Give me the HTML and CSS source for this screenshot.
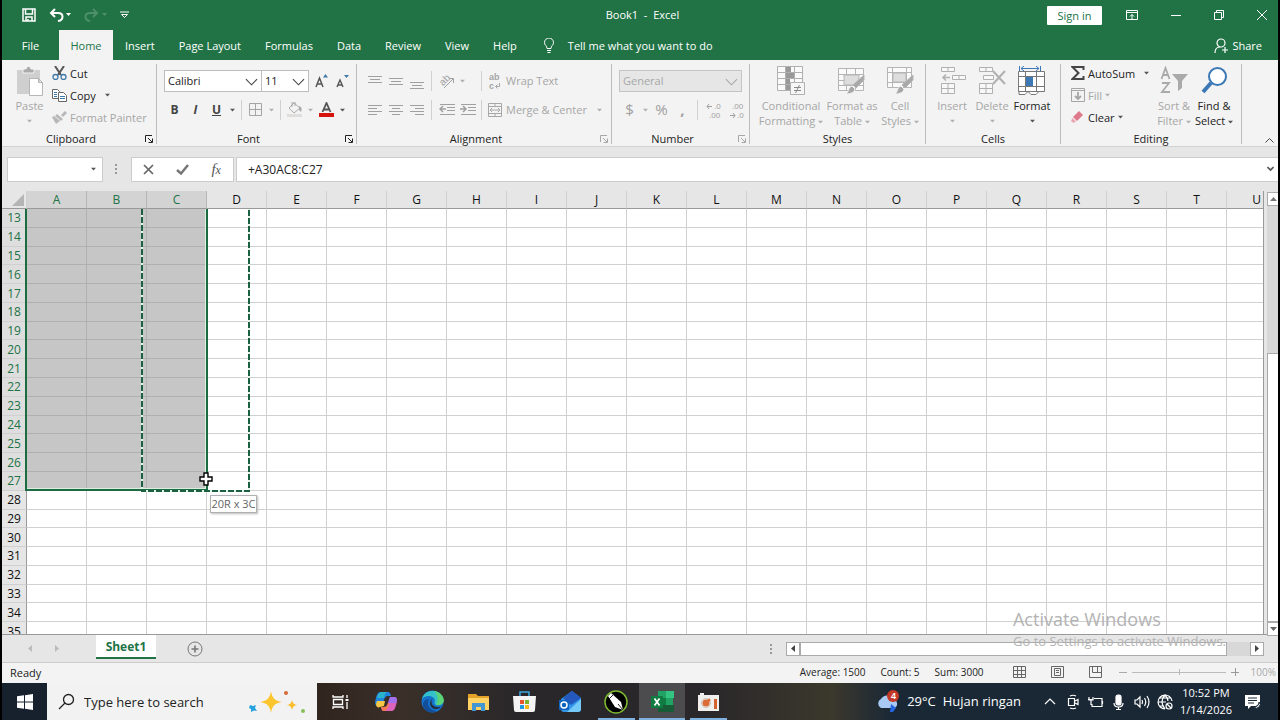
FILE: index.html
```html
<!DOCTYPE html>
<html lang="en">
<head>
<meta charset="utf-8">
<title>Book1 - Excel</title>
<link rel="stylesheet" href="styles.css">
</head>
<body>
<svg class="defs" aria-hidden="true">
  <symbol id="caret" viewBox="0 0 6 4"><path d="M0 .5h6L3 3.7z" fill="currentColor"/></symbol>
  <symbol id="chevron" viewBox="0 0 14 8"><path d="M1 1l6 6 6-6" fill="none" stroke="currentColor" stroke-width="1.2"/></symbol>
  <symbol id="launcher" viewBox="0 0 8 8"><path d="M.5 7V.5H7M3 3l4 4M7.500 3.500v4h-4" fill="none" stroke="currentColor"/></symbol>
  <symbol id="brush" viewBox="0 0 20 20"><path d="M19 0v5l-8 8-3-3z" fill="#a8a8a8"/><path d="M7 11l3 3c0 3-4 5-9 5 3-2 2-7 6-8z" fill="#a8a8a8" stroke="#f3f3f3"/></symbol>
</svg>
<div class="app">
  <header class="titlebar">
    <div class="quick">
      <button aria-label="Save"><svg width="14" height="14" viewBox="0 0 14 14" fill="none" stroke="#fff" stroke-width="1.500"><path d="M1 1h12v12H1zM3.500 1v5h7V1M4 13V9h6v4M6 13v-2"/></svg></button>
      <button aria-label="Undo"><svg width="22" height="14" viewBox="0 0 22 14"><path d="M6 1L2 5l4 4M2 5h7c6 0 6 7 0 8" fill="none" stroke="#fff" stroke-width="2"/><path d="M17 5h5l-2.500 3z" fill="#fff"/></svg></button>
      <button aria-label="Redo" disabled><svg width="23" height="14" viewBox="0 0 23 14"><path d="M9 1l4 4-4 4M13 5H6c-6 0-6 7 0 8" fill="none" stroke="#4e9069" stroke-width="2"/><path d="M18 5h5l-2.500 3z" fill="#4e9069"/></svg></button>
      <button aria-label="Customize"><svg width="9" height="8" viewBox="0 0 9 8" fill="none" stroke="#fff"><path d="M0 1h9M1.500 3.500l3 3 3-3z"/></svg></button>
    </div>
    <h1 class="doc">Book1&nbsp; -&nbsp; Excel</h1>
    <div class="window">
      <button class="signin">Sign in</button>
      <button aria-label="Ribbon options"><svg width="12" height="10" viewBox="0 0 12 10" fill="none" stroke="#fff"><path d="M.5.500h11v9H.5zM.5 2.500h11M6 9V4.500M4 6.500l2-2 2 2"/></svg></button>
      <button aria-label="Minimize"><svg width="10" height="10" viewBox="0 0 10 10" stroke="#fff"><path d="M0 5.500h10"/></svg></button>
      <button aria-label="Restore"><svg width="10" height="10" viewBox="0 0 10 10" fill="none" stroke="#fff"><path d="M.5 2.500h7v7h-7zM2.500 2.500v-2h7v7h-2"/></svg></button>
      <button aria-label="Close"><svg width="10" height="10" viewBox="0 0 10 10" stroke="#fff"><path d="M0 0l10 10M10 0L0 10"/></svg></button>
    </div>
  </header>
  <nav class="tabs">
    <button>File</button><button class="active">Home</button><button>Insert</button><button>Page Layout</button><button>Formulas</button><button>Data</button><button>Review</button><button>View</button><button>Help</button>
    <button class="tell"><svg width="10" height="15" viewBox="0 0 10 15" fill="none" stroke="#fff"><path d="M3 10.500c0-3-2.500-3-2.500-6a4.500 4.500 0 0 1 9 0c0 3-2.500 3-2.500 6zM3 12.500h4M3.500 14.500h3"/></svg>Tell me what you want to do</button>
    <button class="share"><svg width="14" height="15" viewBox="0 0 14 15" fill="none" stroke="#fff" stroke-width="1.200"><circle cx="7" cy="5" r="4"/><path d="M1 15c0-4 2-6 5-6M8 12h6M11 9v6"/></svg>Share</button>
  </nav>

  <section class="ribbon" aria-label="Home">
    <div class="group clipboard">
      <div class="body">
        <button class="big off paste"><svg width="28" height="30" viewBox="0 0 28 30"><path d="M1 4h23v24H1z" fill="#cfcfcf"/><path d="M7 7V3h3a2.500 2.500 0 0 1 5 0h3v4z" fill="#aaa" stroke="#f3f3f3"/><path d="M13.500 12.500h9l4 4v13h-13zM22.500 12.500v4h4" fill="#fff" stroke="#b5b5b5"/></svg>Paste<svg class="caret"><use href="#caret"/></svg></button>
        <div class="stack">
          <button><svg width="15" height="14" viewBox="0 0 15 14" fill="none"><path d="M3 0l6 9M12 0L6 9" stroke="#555" stroke-width="2"/><circle cx="3.500" cy="11" r="2.500" stroke="#3f79a8" stroke-width="1.300"/><circle cx="11.500" cy="11" r="2.500" stroke="#3f79a8" stroke-width="1.300"/></svg>Cut</button>
          <button><svg width="15" height="13" viewBox="0 0 15 13" fill="#fff" stroke="#666"><path d="M.5.500h5l2 2v7h-7z"/><path d="M2 3.500h3M2 5.500h3M2 7.500h3" stroke="#3f79a8"/><path d="M6.500 3.500h5l3 3v6h-8z"/><path d="M8 7.500h5M8 9.500h5" stroke="#3f79a8"/></svg>Copy<svg class="caret wide"><use href="#caret"/></svg></button>
          <button class="off"><svg width="15" height="13" viewBox="0 0 15 13" fill="#b8b8b8"><path d="M13 0l2 2-4 4-2-2zM5 3l6 5-2 2-6-5zM2 5l6 5-4 3-4-7z"/></svg>Format Painter</button>
        </div>
      </div>
      <footer>Clipboard<button class="launch" aria-label="Clipboard options"><svg><use href="#launcher"/></svg></button></footer>
    </div>

    <div class="group font">
      <div class="body rows">
        <div class="row">
          <label class="pick name"><select aria-label="Font"><option>Calibri</option></select><svg><use href="#chevron"/></svg></label>
          <label class="pick size"><select aria-label="Font size"><option>11</option></select><svg><use href="#chevron"/></svg></label>
          <button class="t grow" aria-label="Increase font size"><svg width="13" height="14" viewBox="0 0 13 14"><path d="M1 13L4.500 4 8 13M2 10h5" fill="none" stroke="#555" stroke-width="1.500"/><path d="M8 3.500L10.500 0 13 3.500z" fill="#3f79a8"/></svg></button>
          <button class="t" aria-label="Decrease font size"><svg width="13" height="14" viewBox="0 0 13 14"><path d="M1 13l3-7 3 7M2 11h4" fill="none" stroke="#555" stroke-width="1.400"/><path d="M8 1h5l-2.500 3z" fill="#3f79a8"/></svg></button>
        </div>
        <div class="row">
          <button class="t"><b>B</b></button><button class="t"><b><i>I</i></b></button><button class="t"><b><u>U</u></b></button><button class="drop"><svg class="caret"><use href="#caret"/></svg></button>
          <i class="sep tight"></i>
          <button class="t" aria-label="Borders"><svg width="13" height="13" viewBox="0 0 13 13" fill="none" stroke="#a5a5a5"><path d="M.5.500h12v12H.5zM6.500.500v12M.5 6.500h12"/></svg></button><button class="drop off"><svg class="caret"><use href="#caret"/></svg></button>
          <i class="sep tight"></i>
          <button class="t" aria-label="Fill color"><svg width="16" height="15" viewBox="0 0 16 15"><path d="M2 6l5-5 6 5-6 5zM5 5V0h3v4" fill="none" stroke="#aaa"/><path d="M12 4c3 1 3 3 2 6l-2-2z" fill="#aaa"/><path d="M0 12h15v3H0z" fill="#e0dedc"/></svg></button><button class="drop off"><svg class="caret"><use href="#caret"/></svg></button>
          <button class="t" aria-label="Font color"><svg width="15" height="15" viewBox="0 0 15 15"><path d="M3.500 10l4-9 4 9M5 7.500h5" fill="none" stroke="#555" stroke-width="1.800"/><path d="M0 11h15v4H0z" fill="#d8140f"/></svg></button><button class="drop"><svg class="caret"><use href="#caret"/></svg></button>
        </div>
      </div>
      <footer>Font<button class="launch" aria-label="Font options"><svg><use href="#launcher"/></svg></button></footer>
    </div>

    <div class="group align">
      <div class="body rows">
        <div class="row off">
          <button class="t" aria-label="Top align"><svg width="14" height="16" viewBox="0 0 14 16" stroke="currentColor"><path d="M0 3.500h14M2 6.500h10M0 9.500h14"/></svg></button>
          <button class="t" aria-label="Middle align"><svg width="14" height="16" viewBox="0 0 14 16" stroke="currentColor"><path d="M0 5.500h14M2 8.500h10M0 11.500h14"/></svg></button>
          <button class="t" aria-label="Bottom align"><svg width="14" height="16" viewBox="0 0 14 16" stroke="currentColor"><path d="M0 9.500h14M2 12.500h10M0 15.500h14"/></svg></button>
          <i class="sep"></i>
          <button class="t" aria-label="Orientation"><svg width="18" height="18" viewBox="0 0 18 18"><text class="tiny" x="2" y="13" font-size="10" transform="rotate(-45 5 10)" fill="currentColor">ab</text><path d="M6 16L15 7M11 6.500h4.500V11" fill="none" stroke="currentColor"/></svg></button><button class="drop"><svg class="caret"><use href="#caret"/></svg></button>
          <i class="sep far"></i>
          <button class="txt"><svg width="14" height="18" viewBox="0 0 14 18" fill="currentColor"><text class="tiny" x="1" y="8" font-size="9" font-weight="700">ab</text><text class="tiny" x="1" y="17" font-size="9" font-weight="700">c</text><path d="M11.500 11v3.500H8M9.500 12.500l-2 2 2 2" fill="none" stroke="currentColor"/></svg>Wrap Text</button>
        </div>
        <div class="row off">
          <button class="t" aria-label="Align left"><svg width="14" height="12" viewBox="0 0 14 12" stroke="currentColor"><path d="M0 1.500h14M0 4.500h9M0 7.500h14M0 10.500h9"/></svg></button>
          <button class="t" aria-label="Center"><svg width="14" height="12" viewBox="0 0 14 12" stroke="currentColor"><path d="M0 1.500h14M3 4.500h8M0 7.500h14M3 10.500h8"/></svg></button>
          <button class="t" aria-label="Align right"><svg width="14" height="12" viewBox="0 0 14 12" stroke="currentColor"><path d="M0 1.500h14M5 4.500h9M0 7.500h14M5 10.500h9"/></svg></button>
          <i class="sep"></i>
          <button class="t" aria-label="Decrease indent"><svg width="16" height="12" viewBox="0 0 16 12" stroke="currentColor" fill="none"><path d="M1 .5h15M8 3.500h8M8 6.500h8M1 10.500h15"/><path d="M1 5h6M4 2L1 5l3 3" stroke-width="1.500"/></svg></button>
          <button class="t" aria-label="Increase indent"><svg width="16" height="12" viewBox="0 0 16 12" stroke="currentColor" fill="none"><path d="M1 .5h15M8 3.500h8M8 6.500h8M1 10.500h15"/><path d="M0 5h6M3 2l3 3-3 3" stroke-width="1.500"/></svg></button>
          <i class="sep near"></i>
          <button class="txt"><svg width="14" height="14" viewBox="0 0 14 14" fill="none" stroke="currentColor"><path d="M.5.500h13v13H.5zM.5 3.500h13M.5 10.500h13M7 .5v3M7 10.500v3M2 7h10M4 5L2 7l2 2M10 5l2 2-2 2"/></svg>Merge &amp; Center<svg class="caret wide"><use href="#caret"/></svg></button>
        </div>
      </div>
      <footer>Alignment<button class="launch off" aria-label="Alignment options"><svg><use href="#launcher"/></svg></button></footer>
    </div>

    <div class="group number">
      <div class="body rows">
        <div class="row off"><label class="pick format"><select aria-label="Number format" disabled><option>General</option></select><svg><use href="#chevron"/></svg></label></div>
        <div class="row off">
          <button class="t large">$</button><button class="drop"><svg class="caret"><use href="#caret"/></svg></button><button class="t large">%</button><button class="t large"><b>,</b></button>
          <i class="sep"></i>
          <button class="t wide" aria-label="Increase decimal"><svg width="16" height="18" viewBox="0 0 16 18" fill="currentColor" font-size="8"><text class="tiny" x="8" y="8">.0</text><text class="tiny" x="3" y="17">.00</text><path d="M6 5.500H1M3 3L1 5.500 3 8" fill="none" stroke="currentColor"/></svg></button>
          <button class="t wide" aria-label="Decrease decimal"><svg width="16" height="18" viewBox="0 0 16 18" fill="currentColor" font-size="8"><text class="tiny" x="3" y="8">.00</text><text class="tiny" x="8" y="17">.0</text><path d="M1 14.500h5M4 12l2 2.500L4 17" fill="none" stroke="currentColor"/></svg></button>
        </div>
      </div>
      <footer>Number<button class="launch off" aria-label="Number options"><svg><use href="#launcher"/></svg></button></footer>
    </div>

    <div class="group styles">
      <div class="body off">
        <button class="big c1"><svg width="28" height="30" viewBox="0 0 28 30" fill="none" stroke="#b0b0b0"><path d="M.5.500h25v24H.5zM8.500.500v24M17.500.500v24M.5 6.500h25M.5 12.500h25M.5 18.500h25" fill="#fafafa"/><path d="M9 1h5v5H9zM9 7h8v5H9zM9 13h4v5H9zM9 19h7v5H9z" fill="#999" stroke="none"/><path d="M13.500 16.500h14v12h-14z" fill="#f6f6f6"/><path d="M17 21.500h7M17 24.500h7M22.500 19l-4 8" stroke="#888"/></svg><span>Conditional<br>Formatting <svg class="caret in"><use href="#caret"/></svg></span></button>
        <button class="big c2"><svg width="28" height="30" viewBox="0 0 28 30" fill="none" stroke="#b5b5b5"><path d="M.5 2.500h25v22H.5zM8.500 2.500v22M17.500 2.500v22M.5 8.500h25M.5 14.500h25M.5 19.500h25" fill="#fafafa"/><path d="M6 9h15v10H6z" fill="#ddd"/><use href="#brush" x="7" y="9" width="20" height="20"/></svg><span>Format as<br>Table <svg class="caret in"><use href="#caret"/></svg></span></button>
        <button class="big c3"><svg width="28" height="30" viewBox="0 0 28 30" fill="none" stroke="#b5b5b5"><path d="M1.500 1.500h24v20h-24zM6.500 1.500v20M20.500 1.500v20M1.500 6.500h24M1.500 16.500h24" fill="#fafafa"/><path d="M7 7h13v9H7z" fill="#ddd"/><use href="#brush" x="8" y="9" width="20" height="20"/></svg><span>Cell<br>Styles <svg class="caret in"><use href="#caret"/></svg></span></button>
      </div>
      <footer>Styles</footer>
    </div>

    <div class="group cells">
      <div class="body">
        <button class="big off"><svg width="28" height="30" viewBox="0 0 28 30" fill="#f8f8f8" stroke="#b0b0b0"><path d="M3.500 1.500h13v4h-13zM10 1.500v4M14.500 9.500h13v4h-13zM21 9.500v4M3.500 17.500h13v10h-13zM10 17.500v10M3.500 22.500h13"/><path d="M5 11.500h7M8 8.500l-3 3 3 3" fill="none" stroke-width="1.500"/></svg>Insert<svg class="caret"><use href="#caret"/></svg></button>
        <button class="big off"><svg width="28" height="30" viewBox="0 0 28 30" fill="#f8f8f8" stroke="#b0b0b0"><path d="M1.500 1.500h13v4h-13zM8 1.500v4M5.500 9.500h10v4h-10zM1.500 17.500h13v10h-13zM8 17.500v10M1.500 22.500h13"/><path d="M15 5l12 13M27 5L15 18" stroke-width="2"/></svg>Delete<svg class="caret"><use href="#caret"/></svg></button>
        <button class="big"><svg width="28" height="30" viewBox="0 0 28 30" fill="#fff" stroke="#777"><path d="M1 25.500v3h6l3-3 3 3h5l3-3"/><path d="M.5 5.500h26v20H.5zM7.500 5.500v20M18.500 5.500v20M.5 10.500h26M.5 20.500h26"/><path d="M8 11h7v9H8z" fill="#3b78b5" stroke="none"/><path d="M1.500 0v5M22.500 0v5M3 2.500h18M6 0L3 2.500 6 5M18 0l3 2.500L18 5" stroke="#3b78b5" fill="none"/></svg>Format<svg class="caret"><use href="#caret"/></svg></button>
      </div>
      <footer>Cells</footer>
    </div>

    <div class="group editing">
      <div class="body">
        <div class="stack">
          <button><svg width="14" height="14" viewBox="0 0 14 14"><path d="M12.500 4V1H1.500l6 6-6 6h11v-3" fill="none" stroke="#444" stroke-width="2"/></svg>AutoSum<svg class="caret wide"><use href="#caret"/></svg></button>
          <button class="off"><svg width="14" height="14" viewBox="0 0 14 14" fill="none" stroke="currentColor"><path d="M.5.500h13v13H.5zM.5 2.500h13"/><path d="M7 4v7M4 8l3 3 3-3" stroke-width="1.800"/></svg>Fill<svg class="caret"><use href="#caret"/></svg></button>
          <button><svg width="14" height="14" viewBox="0 0 14 14"><path d="M8 1l4 4-6 6-4-4z" fill="#e0788c"/><path d="M1.500 8L5 11.500l-1.500 1h-2L0 11z" fill="#eba5b2"/></svg>Clear<svg class="caret"><use href="#caret"/></svg></button>
        </div>
        <button class="big off"><svg width="28" height="30" viewBox="0 0 28 30" fill="none" stroke="#aaa" stroke-width="1.800"><path d="M1.500 13L5.500 2l4 11M3 9h5M2 17h7l-7 9h8"/><path d="M12 8h16l-6 7v7l-4 3V15z" fill="#aaa" stroke="none"/></svg><span>Sort &amp;<br>Filter <svg class="caret in"><use href="#caret"/></svg></span></button>
        <button class="big"><svg width="28" height="30" viewBox="0 0 28 30" fill="none" stroke="#3b78b5"><circle cx="17.500" cy="10.500" r="8.500" stroke-width="2" fill="#fff"/><path d="M11 17L3 26" stroke-width="4"/></svg><span>Find &amp;<br>Select <svg class="caret in"><use href="#caret"/></svg></span></button>
      </div>
      <footer>Editing</footer>
    </div>
    <button class="collapse" aria-label="Collapse ribbon"><svg width="9" height="6" viewBox="0 0 9 6"><path d="M.5 5.500l4-4 4 4" fill="none" stroke="#444"/></svg></button>
  </section>

  <section class="formula">
    <label class="namebox"><input aria-label="Name box"><svg class="caret"><use href="#caret"/></svg></label>
    <span class="dots"></span>
    <div class="fx">
      <button aria-label="Cancel"><svg width="11" height="11" viewBox="0 0 11 11" stroke="#666" stroke-width="1.700"><path d="M1 1l9 9M10 1l-9 9"/></svg></button>
      <button aria-label="Enter"><svg width="13" height="11" viewBox="0 0 13 11" fill="none" stroke="#777" stroke-width="2.500"><path d="M1 6l4 3.500L12 1"/></svg></button>
      <button class="fn" aria-label="Insert function"><i>f<small>x</small></i></button>
    </div>
    <div class="entry"><input aria-label="Formula" value="+A30AC8:C27"><button aria-label="Expand"><svg width="7" height="6" viewBox="0 0 7 6"><path d="M.5 1l3 3 3-3" fill="none" stroke="#555" stroke-width="1.600"/></svg></button></div>
  </section>

  <main class="sheet">
    <div class="grid">
      <table><thead><tr id="letters"></tr></thead><tbody id="cells"></tbody></table>
      <div class="selection"></div>
      <svg class="ants" width="112" height="285" fill="none" stroke="#1b6040" stroke-width="2"><path d="M2 0v282h107V0" stroke="#e6f5ec"/><path d="M2 0v282h107V0" stroke-dasharray="6 2"/></svg>
      <svg class="cursor" width="14" height="14" viewBox="0 0 14 14"><path d="M5 1h4v4h4v4H9v4H5V9H1V5h4z" fill="#fff" stroke="#000" stroke-width="1.400"/></svg>
      <div class="tip">20R x 3C</div>
    </div>
    <div class="vscroll"><button aria-label="Scroll up"><svg width="7" height="4" viewBox="0 0 7 4"><path d="M0 4l3.500-4L7 4z" fill="#777"/></svg></button><div class="track"></div><div class="thumb"></div><button aria-label="Scroll down"><svg width="7" height="4" viewBox="0 0 7 4"><path d="M0 0h7L3.500 4z" fill="#666"/></svg></button></div>
    <div class="watermark"><p class="head">Activate Windows</p><p>Go to Settings to activate Windows.</p></div>
  </main>

  <div class="sheetbar">
    <button class="nav" aria-label="Previous sheet"><svg width="4" height="7" viewBox="0 0 4 7"><path d="M4 0v7L0 3.500z" fill="#bbb"/></svg></button>
    <button class="nav" aria-label="Next sheet"><svg width="4" height="7" viewBox="0 0 4 7"><path d="M0 0v7l4-3.500z" fill="#bbb"/></svg></button>
    <button class="sheettab">Sheet1</button>
    <button class="add" aria-label="New sheet"><svg width="16" height="16" viewBox="0 0 16 16" fill="none" stroke="#777"><circle cx="8" cy="8" r="7"/><path d="M8 4.500v7M4.500 8h7" stroke-width="1.600"/></svg></button>
    <span class="dots"></span>
    <div class="hscroll"><button aria-label="Scroll left"><svg width="4" height="7" viewBox="0 0 4 7"><path d="M4 0v7L0 3.500z" fill="#444"/></svg></button><div class="thumb"></div><div class="track"></div><button aria-label="Scroll right"><svg width="4" height="7" viewBox="0 0 4 7"><path d="M0 0v7l4-3.500z" fill="#444"/></svg></button></div>
  </div>

  <div class="status">
    <span class="ready">Ready</span>
    <span>Average: 1500</span><span>Count: 5</span><span>Sum: 3000</span>
    <div class="views">
      <button aria-label="Normal"><svg width="13" height="12" viewBox="0 0 13 12" fill="none" stroke="#666"><path d="M.5.500h12v11H.5zM4.500.500v11M8.500.500v11M.5 4.500h12M.5 8.500h12"/></svg></button>
      <button aria-label="Page layout"><svg width="13" height="12" viewBox="0 0 13 12" fill="none" stroke="#666"><path d="M.5.500h12v11H.5zM3.500 2.500h6v7h-6zM5 4.500h3M5 6.500h3"/></svg></button>
      <button aria-label="Page break"><svg width="13" height="12" viewBox="0 0 13 12" fill="none" stroke="#666"><path d="M.5.500h12v11H.5zM3.500.500v6h9M8.500.500v6"/></svg></button>
    </div>
    <div class="zoom"><button aria-label="Zoom out"><svg width="8" height="8" viewBox="0 0 8 8" stroke="#aaa"><path d="M0 4.500h8"/></svg></button><svg class="slider" width="94" height="8" viewBox="0 0 94 8" stroke="#bbb"><path d="M0 4.500h94M47.500 1v6"/></svg><button aria-label="Zoom in"><svg width="8" height="8" viewBox="0 0 8 8" stroke="#999"><path d="M0 4.500h8M4.500 0v8"/></svg></button></div>
    <span class="pct">100%</span>
  </div>

  <footer class="taskbar">
    <button class="start" aria-label="Start"><svg width="16" height="16" viewBox="0 0 16 16" fill="#fff"><path d="M0 2.300L7 1.300v6.200H0zM8 1.200L16 0v7.500H8zM0 8.500h7v6.200l-7-1zM8 8.500h8V16l-8-1.200z"/></svg></button>
    <label class="search"><svg width="17" height="17" viewBox="0 0 17 17" fill="none" stroke="#222" stroke-width="1.300"><circle cx="10.500" cy="6.500" r="5"/><path d="M7 10l-6 6"/></svg><input placeholder="Type here to search" aria-label="Type here to search"><svg width="58" height="24" viewBox="0 0 58 24"><path d="M22 1c1 7 4 10 11 11-7 1-10 4-11 11-1-7-4-10-11-11 7-1 10-4 11-11z" fill="#fbc52d"/><path d="M43 10c.6 3 2 4.500 5 5-3 .6-4.500 2-5 5-.6-3-2-4.500-5-5 3-.6 4.500-2 5-5z" fill="#f9bd29"/><path d="M1 15l3 1 3-1-1 3 2 3-3-.500L2 22v-3l-2-1z" fill="#24a1df"/><circle cx="37" cy="3" r="2" fill="#d66a3b"/><circle cx="54" cy="21" r="2" fill="#8abf58"/></svg></label>
    <div class="apps">
      <button aria-label="Task view"><svg width="17" height="16" viewBox="0 0 17 16" fill="none" stroke="#fff" stroke-width="1.300"><path d="M1 1v2h10V1M1 15v-2h10v2M1.500 5.500h9v5h-9zM15 1v3M15 8v7"/><path d="M13.500 5h3v2h-3z" fill="#fff" stroke="none"/></svg></button>
      <button aria-label="Copilot"><svg width="22" height="21" viewBox="0 0 22 21"><path d="M6 1h7c2 0 2 1 3 4h-3c-2 0-3 1-4 4l-2 6H3c-4 0-3-5-2-8 1-4 2-6 5-6z" fill="#1e83e1"/><path d="M2 10l-1 3c0 3 2 4 4 3l4-1 1-5z" fill="#f5c746"/><path d="M3 4c1-2 2-3 3-3h7c-3 0-3 3-4 6H2z" fill="#2bb3c9"/><path d="M16 20H9c-2 0-2-1-3-4h3c2 0 3-1 4-4l2-6h4c4 0 3 5 2 8-1 4-2 6-5 6z" fill="#dc62bb"/><path d="M15 6h4c4 0 3 4 2 6h-8z" fill="#a071ee"/><path d="M6 16h3c2 0 3-1 4-4l1 1c-1 4-2 7-5 7-2 0-2-1-3-4z" fill="#f47a53"/></svg></button>
      <button aria-label="Edge"><svg width="23" height="23" viewBox="0 0 23 23"><circle cx="11.500" cy="11.500" r="11" fill="#1673cc"/><path d="M1 9C3 1 12-1 18 3c5 4 6 12-1 12-4 0-4-2-3-4 0-5-9-7-13-2z" fill="#35c1c9"/><path d="M13 1c7 1 10 6 10 10-1 4-5 5-8 4 3-5 2-10-2-14z" fill="#5bd477"/><path d="M8 9c-3 6 1 12 8 12-7 4-14-1-14-6 0-4 3-6 6-6z" fill="#134f98"/><path d="M11 9c-2 5 1 9 9 8-4 4-11 2-11-4 0-2 1-3 2-4z" fill="#242e3b"/></svg></button>
      <button aria-label="File Explorer"><svg width="21" height="18" viewBox="0 0 21 18"><path d="M0 1h8l2 2h11v5H0z" fill="#e3a227"/><path d="M0 5h21v12H0z" fill="#ffd263"/><path d="M4 18v-8h13v8h-4v-4H8v4z" fill="#4296d2"/></svg></button>
      <button aria-label="Store"><svg width="23" height="22" viewBox="0 0 23 22"><path d="M7 6V1h9v5" fill="none" stroke="#3aa9df" stroke-width="1.500"/><path d="M0 5h23l-1 14q0 2-2 2H3q-2 0-2-2z" fill="#f4f4f4"/><path d="M7 9h4v4H7z" fill="#e85430"/><path d="M12 9h4v4h-4z" fill="#78b52c"/><path d="M7 14h4v4H7z" fill="#2199dc"/><path d="M12 14h4v4h-4z" fill="#f5b51d"/></svg></button>
      <button aria-label="Outlook"><svg width="23" height="22" viewBox="0 0 23 22"><path d="M2 8L13 0l9 7v11q0 3-3 3H5q-3 0-3-3z" fill="#3295e8"/><path d="M4 7l9-7 9 7-10 7z" fill="#2458bd"/><path d="M22 8v11q-1 2-3 2H8z" fill="#75c9f7"/><path d="M0 9h10v10H0z" fill="#1063be"/><circle cx="5" cy="14" r="3" fill="none" stroke="#fff" stroke-width="1.500"/></svg></button>
      <button class="open" aria-label="CorelDRAW"><svg width="24" height="24" viewBox="0 0 24 24"><circle cx="12" cy="12" r="11" fill="#000" stroke="#7db72f" stroke-width="1.500"/><path d="M4 6l3-3 10 9 2 8-8-3z" fill="#fff"/><path d="M5 9l5-5M14 14l5 6" stroke="#222"/></svg></button>
      <button class="open current" aria-label="Excel"><svg width="23" height="21" viewBox="0 0 23 21"><path d="M7 0h15v21H7z" fill="#21a366"/><path d="M15 0h8v7h-8z" fill="#33c481"/><path d="M7 7h8v7H7z" fill="#107c41"/><path d="M7 14h16v7H7z" fill="#185c37"/><path d="M0 5h12v12H0z" fill="#107c41"/><path d="M3.500 7.500l5 7M8.500 7.500l-5 7" stroke="#fff" stroke-width="1.700"/></svg></button>
      <button class="open" aria-label="Recorder"><svg width="21" height="18" viewBox="0 0 21 18"><path d="M0 2h2V0h4v2h15v16H0z" fill="#f0efed"/><circle cx="8" cy="10" r="4.500" fill="none" stroke="#c9c3bf"/><circle cx="8" cy="10" r="3.500" fill="#db6c37"/><circle cx="11" cy="7" r="1.500" fill="#db6c37"/><path d="M16 6h3v10h-3z" fill="#d4632f"/></svg></button>
    </div>
    <button class="weather"><svg width="24" height="24" viewBox="0 0 24 24"><path d="M5 18a5 5 0 0 1 0-9 7 7 0 0 1 12 0 5 5 0 0 1 2 9z" fill="#a9caf5"/><path d="M15 14l5 4-3 4h-3z" fill="#2467df"/><circle cx="17" cy="6" r="6" fill="#c43827"/><text class="tiny" x="15" y="9" font-size="9" font-weight="700" fill="#fff">4</text></svg><span>29°C</span><span>Hujan ringan</span></button>
    <div class="tray">
      <button aria-label="Hidden icons"><svg width="12" height="7" viewBox="0 0 12 7"><path d="M1 6l5-5 5 5"/></svg></button>
      <button aria-label="Meet now"><svg width="12" height="16" viewBox="0 0 12 16"><path d="M1.500 4.500h6v7h-6zM8 7l3-1.500v5L8 9M3 2q3-1.500 6 0M3 14q3 1.500 6 0"/></svg></button>
      <button aria-label="Battery"><svg width="16" height="12" viewBox="0 0 16 12"><path d="M6 2.500h8v8H4V8M14.500 5v3M1 1v3h4V1M3 4v5M0 3.500h5"/></svg></button>
      <button aria-label="Microphone"><svg width="11" height="16" viewBox="0 0 11 16"><rect x="3" y="1" width="5" height="10" rx="2" fill="#fff"/><path d="M1 9q0 4 4.500 4T10 9M5.500 13v3M3 15.500h5"/></svg></button>
      <button aria-label="Volume"><svg width="16" height="14" viewBox="0 0 16 14"><path d="M1 5h2l3-3v10L3 9H1zM8 5q1 2 0 4M10.500 3q2.500 4 0 8M13 1q4 6 0 12"/></svg></button>
      <button aria-label="Network"><svg width="16" height="16" viewBox="0 0 16 16"><path d="M8 15A7 7 0 1 1 15 7M1 8h8M2 4h12M2 12h5M8 1Q2 8 8 15M8 1q3 3 3 6"/><circle cx="12" cy="12" r="3"/><path d="M10 10l4 4"/></svg></button>
    </div>
    <button class="clock"><span>10:52 PM</span><span>1/14/2026</span></button>
    <button class="notes" aria-label="Notifications"><svg width="16" height="16" viewBox="0 0 16 16"><path d="M0 1h15v8l-4 3H6l-3 3v-3H0z" fill="#fff"/><path d="M3 4h9M3 6.500h9M3 9h6" stroke="#1a2836"/><path d="M14 8a3.500 3.500 0 1 1-5 5c3 0 5-2 5-5z" fill="#fff" stroke="#1a2836"/></svg></button>
  </footer>
</div>
<script src="grid.js"></script>
</body>
</html>
```
FILE: styles.css
```css
* { box-sizing: border-box; }
body { margin: 0; background: #000; color: #222; font: 11px/15px "Open Sans", "Noto Sans", sans-serif; }
button, input, select { margin: 0; padding: 0; border: 0; background: none; color: inherit; font: inherit; }
button { display: flex; align-items: center; justify-content: center; white-space: nowrap; }
svg { flex: none; display: block; }
p, h1 { margin: 0; }
.defs { position: absolute; width: 0; height: 0; }
.app { display: flex; flex-direction: column; height: 100vh; margin: 0 2px; background: #e6e6e6; overflow: hidden; }
.caret { width: 5px; height: 4px; color: #555; }
.off .caret { color: #b0b0b0; }
.off { color: #a6a6a6; }
.tiny { font-family: "Liberation Sans", sans-serif; }

.titlebar { display: grid; grid-template-columns: 1fr auto 1fr; align-items: center; height: 30px; background: #217346; color: #fff; }
.quick { display: flex; align-items: center; gap: 13px; padding-left: 20px; }
.doc { padding-left: 5px; font-size: 11px; line-height: 14px; font-weight: 400; }
.window { display: flex; justify-content: flex-end; align-items: center; gap: 33px; padding-right: 11px; }
.window .signin { width: 55px; height: 19px; margin-right: -9px; background: #fff; color: #217346; border-radius: 1px; }

.tabs { display: flex; height: 30px; background: #217346; color: #fff; }
.tabs button { padding: 0 12px; }
.tabs button:first-child { width: 57px; padding: 0 16px; }
.tabs .active { width: 54px; background: #f3f3f3; color: #217346; }
.tabs .tell { gap: 14px; margin-left: 3px; }
.tabs .share { gap: 4px; margin-left: auto; padding: 0 16px; }

.ribbon { display: flex; height: 87px; padding: 4px 0 2px; background: #f3f3f3; border-bottom: 1px solid #d2d2d2; }
.group { display: flex; flex-direction: column; height: 80px; border-right: 1px solid #bdbdbd; }
.body { display: flex; flex: 1; min-height: 0; }
.group footer { position: relative; display: flex; align-items: center; justify-content: center; height: 14px; margin-bottom: -1px; padding-right: 16px; }
.styles footer, .cells footer, .editing footer { padding-right: 0; }
.launch { position: absolute; right: 3px; top: 4px; }
.launch svg { width: 8px; height: 8px; }
.big { flex-direction: column; justify-content: flex-start; padding-top: 2px; }
.big > svg:first-child { margin-bottom: 2px; }
.big .caret { margin-top: 6px; }
.big .caret.in { display: inline-block; margin: 0; vertical-align: middle; }
.stack { display: flex; flex-direction: column; }
.stack button { justify-content: flex-start; height: 22px; gap: 3px; }
.stack .caret.wide, .txt .caret.wide { margin-left: 6px; }
.clipboard { width: 155px; }
.clipboard .body { padding-left: 13px; }
.paste { width: 29px; }
.clipboard .stack { margin: -2px 0 0 8px; }
.rows { flex-direction: column; padding: 5px 0 0 7px; gap: 6px; }
.row { display: flex; align-items: center; height: 23px; }
.pick { position: relative; display: flex; height: 22px; border: 1px solid #bdbdbd; background: #fff; }
.pick select { width: 100%; padding-left: 3px; appearance: none; opacity: 1; }
.pick svg { position: absolute; right: 3px; top: 7px; width: 13px; height: 8px; color: #444; pointer-events: none; }
.pick.name { width: 98px; }
.pick.size { width: 48px; margin-left: -1px; }
.t { width: 21px; height: 22px; font-size: 12px; color: #444; }
.off .t { color: #a0a0a0; }
.grow { margin-left: 2px; }
.drop { width: 11px; height: 22px; }
.sep { width: 1px; height: 20px; margin: 0 4px; background: #d0d0d0; }
.sep.tight { margin: 0 3px; }
.sep.far { margin-left: 13px; }
.sep.near { margin-left: 3px; }
.font { width: 200px; }
.align { width: 255px; }
.align .txt { gap: 4px; margin-left: 2px; }
.number { width: 138px; }
.pick.format { width: 123px; background: #e6e6e6; border-color: #c4c4c4; }
.pick.format svg { color: #a8a8a8; }
.large { font-size: 15px; }
.wide.t { width: 23px; }
.styles { width: 176px; }
.styles .body { padding-left: 8px; }
.c1 { width: 66px; }
.c2 { width: 56px; }
.c3 { width: 40px; }
.cells { width: 135px; }
.cells .body { padding-left: 6px; }
.cells .big { width: 40px; }
.editing { width: 181px; }
.editing .body { padding-left: 10px; }
.editing .stack { width: 83px; margin-top: -2px; }
.editing .big { width: 40px; }
.collapse { align-self: flex-end; margin: 0 4px 1px auto; }

.formula { display: flex; align-items: center; height: 44px; padding-left: 5px; }
.namebox, .fx, .entry { display: flex; align-items: center; height: 25px; background: #fff; border: 1px solid #ccc; }
.namebox { width: 96px; padding-right: 6px; }
.namebox input { flex: 1; min-width: 0; }
.dots { width: 2px; height: 10px; margin: 0 14px 0 12px; border-left: 2px dotted #999; }
.fx { width: 103px; margin-right: 2px; }
.fx button { flex: 1; }
.fn { color: #555; font: 15px/18px "Liberation Serif", serif; }
.fn small { font-size: 12px; }
.entry { flex: 1; padding: 0 4px 0 11px; border-right: 0; }
.entry input { flex: 1; font-size: 12px; }

.sheet { position: relative; display: flex; flex: 1; min-height: 0; border-bottom: 1px solid #999; }
.grid { position: relative; flex: 1; min-width: 0; overflow: hidden; border-right: 1px solid #999; }
.grid table { width: 1285px; height: 450px; table-layout: fixed; border-collapse: separate; border-spacing: 0; background: #fff; }
.grid th, .grid td { padding: 0; border: solid #d0d0d0; border-width: 0 1px 1px 0; overflow: hidden; }
.grid th { background: #e6e6e6; color: #111; font-size: 12px; font-weight: 400; line-height: 17px; text-align: center; }
.grid thead th { width: 60px; border-bottom-color: #999; }
.grid thead th:first-child { width: 25px; }
.grid tbody th { padding-top: 1px; line-height: 16px; border-right-color: #999; }
.grid th.hit { background: #d3d3d3; color: #217346; }
.grid thead th.hit { border-right-color: #b5b5b5; }
.grid tbody th.hit { background: #dedede; }
.grid td.hit { background: #c6c6c6; border-color: #b0b0b0; }
.corner svg { margin-left: 10px; }
.selection { position: absolute; left: 23px; top: 18px; width: 183px; height: 282px; border: 2px solid #1d6b40; border-top: 0; box-shadow: inset -1px -1px #d8f0e0; }
.ants { position: absolute; left: 138px; top: 18px; }
.cursor { position: absolute; left: 197px; top: 281px; }
.tip { position: absolute; left: 208px; top: 304px; width: 47px; height: 18px; border: 1px solid #b0b0b0; background: #fff; color: #666; line-height: 16px; text-align: center; box-shadow: 1px 1px 2px #bbb; }
.vscroll { display: flex; flex-direction: column; width: 11px; margin: 1px 0 -2px 3px; }
.vscroll button { height: 14px; background: #fff; border: 1px solid #aaa; border-right: 0; }
.vscroll .track { flex: 148; background: #d8d8d8; }
.vscroll .thumb { flex: 269; background: #fff; border: 1px solid #aaa; border-right: 0; }
.watermark { position: absolute; right: 52px; bottom: -17px; color: #b3b3b3; font-size: 13px; line-height: 20px; z-index: 1; }
.watermark .head { font-size: 18px; line-height: 24px; }

.sheetbar { display: flex; align-items: center; height: 27px; }
.nav { width: 27px; }
.nav + .nav { margin-right: 26px; }
.nav:first-child { margin-left: 14px; }
.sheettab { align-self: flex-start; width: 60px; height: 24px; background: #fff; border-bottom: 2px solid #217346; color: #217346; font-size: 12px; font-weight: 700; }
.add { margin-left: 31px; }
.sheetbar .dots { margin-left: auto; }
.hscroll { display: flex; width: 478px; height: 14px; background: #d8d8d8; margin-right: 14px; }
.hscroll button { width: 14px; background: #fff; border: 1px solid #aaa; }
.hscroll .thumb { flex: 427; background: #fff; border: 1px solid #aaa; }
.hscroll .track { flex: 23; }

.status { display: flex; align-items: center; height: 21px; padding: 0 2px 2px 8px; background: #f3f3f3; border-top: 1px solid #ccc; gap: 15px; font-size: 10px; }
.ready { margin-right: auto; font-size: 11px; }
.views { display: flex; gap: 25px; margin-left: 14px; }
.zoom { display: flex; align-items: center; gap: 5px; margin-left: 2px; }
.pct { margin-left: -3px; color: #aaa; }

.taskbar { display: flex; height: 37px; color: #fff; background: linear-gradient(90deg, #17212e 0, #17212e 50px, #30261f 320px, #3a3029 400px, #29272a 520px, #29272a 700px, #3b382c 830px, #1a2836 890px); }
.start { width: 45px; }
.search { display: flex; align-items: center; width: 270px; padding: 0 10px 0 11px; background: #f2f2f2; }
.search input { flex: 1; min-width: 0; padding-left: 9px; color: #222; font-size: 13px; line-height: 18px; }
.search input::placeholder { color: #222; opacity: 1; }
.apps { display: flex; }
.apps button { width: 46px; }
.apps .open { background: linear-gradient(#7fb2e0, #7fb2e0) center bottom / 37px 2px no-repeat; }
.apps .current { background: linear-gradient(#7fb2e0, #7fb2e0) center bottom / 100% 2px no-repeat #4c4b4e; }
.weather { gap: 7px; margin-left: auto; font-size: 13px; }
.tray { display: flex; margin-left: 17px; }
.tray button { width: 23px; }
.tray svg { fill: none; stroke: #fff; stroke-width: 1.2; }
.clock { flex-direction: column; width: 60px; line-height: 17px; padding-bottom: 2px; }
.notes { width: 34px; margin-right: 8px; }
```
FILE: grid.js
```js
const letters = document.getElementById('letters');
const cells = document.getElementById('cells');
const columns = 'ABCDEFGHIJKLMNOPQRSTU'.split('');
const selected = { columns: 3, lastRow: 27 };

letters.innerHTML = '<th class="corner"><svg width="12" height="12" viewBox="0 0 12 12"><path d="M12 0v12H0z" fill="#b5b5b5"/></svg></th>' +
  columns.map((c, i) => `<th class="${i < selected.columns ? 'hit' : ''}">${c}</th>`).join('');

for (let r = 13; r <= 35; r++) {
  const inRange = r <= selected.lastRow;
  const row = document.createElement('tr');
  row.innerHTML = `<th class="${inRange ? 'hit' : ''}">${r}</th>` +
    columns.map((c, i) => `<td class="${inRange && i < selected.columns ? 'hit' : ''}"></td>`).join('');
  cells.append(row);
}
```
